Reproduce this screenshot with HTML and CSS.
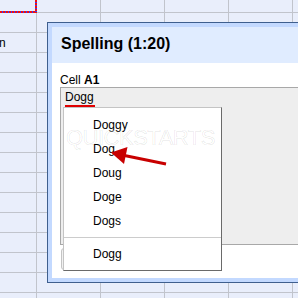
FILE: index.html
```html
<!DOCTYPE html>
<html>
<head>
<meta charset="utf-8">
<link rel="stylesheet" href="styles.css">
</head>
<body>
<div class="sheet">
  <div class="sel"></div>
  <div class="row"></div>
  <div class="row"><span class="overflow-text">n</span></div>
</div>

<div class="dialog">
  <div class="title">Spelling (1:20)</div>
  <div class="body">
    <div class="label">Cell <b>A1</b></div>
    <div class="textbox"><span class="misspelled">Dogg</span></div>
    <div class="buttons"><span class="btn"></span></div>
  </div>
</div>

<div class="menu">
  <div class="item">Doggy</div>
  <div class="item">Dog</div>
  <div class="item">Doug</div>
  <div class="item">Doge</div>
  <div class="item">Dogs</div>
  <div class="sep"></div>
  <div class="item">Dogg</div>
</div>

<div class="watermark">QUICKSTARTS</div>

<svg class="arrow" width="298" height="298" viewBox="0 0 298 298">
  <line x1="166" y1="164" x2="122" y2="155" stroke="#c80000" stroke-width="3"/>
  <polygon points="111,152.5 127.5,147 124,164" fill="#c80000"/>
</svg>
</body>
</html>
```
FILE: styles.css
```css
html, body {
  margin: 0;
  padding: 0;
  width: 298px;
  height: 298px;
  overflow: hidden;
}
body {
  font-family: "Liberation Sans", Arial, sans-serif;
  font-size: 12px;
  color: #000;
  background-color: #e9eefb;
  background-image:
    linear-gradient(to right, #c1c4cc 0 1px, transparent 1px),
    linear-gradient(to bottom, #c1c4cc 0 1px, transparent 1px);
  background-size: 64px 20px, 64px 20px;
  background-position: 36px 0, 0 12px;
  position: relative;
}
.sheet {
  width: 298px;
  height: 298px;
}
.sel {
  width: 37px;
  height: 13px;
  box-sizing: border-box;
  position: relative;
}
.sel::before {
  content: "";
  display: block;
  position: absolute;
  left: 0;
  right: 0;
  bottom: 0;
  height: 2px;
  background: repeating-linear-gradient(to right, #f01010 0 2px, #3a3af0 2px 3px);
}
.sel::after {
  content: "";
  display: block;
  position: absolute;
  top: 0;
  bottom: 0;
  right: 0;
  width: 2px;
  background: repeating-linear-gradient(to bottom, #f01010 0 2px, #3a3af0 2px 3px);
}
.row {
  height: 20px;
  line-height: 20px;
}
.overflow-text {
  display: inline-block;
  margin-left: -1px;
}
.dialog {
  position: absolute;
  left: 47px;
  top: 22px;
  width: 420px;
  height: 261px;
  box-sizing: border-box;
  border: 1px solid #3f5f8e;
  background: #c3d9ff;
  padding: 4px;
  display: flex;
  flex-direction: column;
}
.title {
  height: 36px;
  box-sizing: border-box;
  background: #e0ecff;
  font-size: 16px;
  font-weight: bold;
  line-height: 34px;
  padding-left: 9px;
}
.body {
  flex: 1;
  background: #fff;
  padding: 10px 8px 0;
  display: flex;
  flex-direction: column;
}
.label {
  line-height: 14px;
  height: 14px;
}
.textbox {
  height: 158px;
  box-sizing: border-box;
  background: #eeeeee;
  border: 1px solid #a8a8a8;
  border-right: none;
  padding: 2px 0 0 4px;
  line-height: 14px;
}
.misspelled {
  display: inline-block;
  border-bottom: 2px solid #e00000;
  line-height: 14px;
  height: 15px;
  padding: 0 1px 0 0;
}
.buttons {
  margin-top: 3px;
  padding-left: 1px;
  display: flex;
}
.btn {
  display: inline-block;
  height: 22px;
  box-sizing: border-box;
  width: 80px;
  border: 1px solid #c4c4c4;
  border-radius: 3px;
  background: #f1f1f1;
}
.menu {
  position: absolute;
  left: 63px;
  top: 107px;
  width: 159px;
  height: 164px;
  box-sizing: border-box;
  background: #fff;
  border: 1px solid;
  border-color: #c4c4c4 #6a6a6a #6a6a6a #c4c4c4;
  padding: 5px 0 4px;
}
.item {
  height: 24px;
  line-height: 24px;
  padding-left: 29px;
}
.sep {
  height: 1px;
  margin: 4px 0;
  background: #cccccc;
}
.watermark {
  position: absolute;
  left: 66px;
  top: 128px;
  font-size: 22px;
  letter-spacing: -0.5px;
  line-height: 20px;
  color: rgba(255, 255, 255, 0.3);
  -webkit-text-stroke: 0.7px rgba(0, 0, 0, 0.1);
  pointer-events: none;
}
.arrow {
  position: absolute;
  left: 0;
  top: 0;
  pointer-events: none;
}
```
